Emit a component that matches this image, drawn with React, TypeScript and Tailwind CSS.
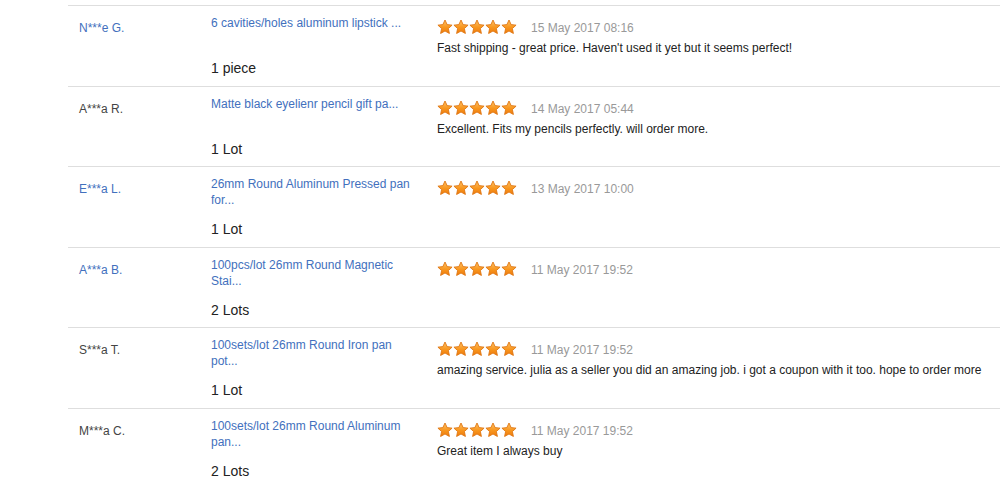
import React from 'react';

type Review = {
  name: string;
  nameBlue: boolean;
  title: string;
  qty: string;
  date: string;
  comment?: string;
  h: string;
};

const reviews: Review[] = [
  { name: 'N***e G.', nameBlue: true, title: '6 cavities/holes aluminum lipstick ...', qty: '1 piece', date: '15 May 2017 08:16', comment: "Fast shipping - great price. Haven't used it yet but it seems perfect!", h: 'h-[81px]' },
  { name: 'A***a R.', nameBlue: false, title: 'Matte black eyelienr pencil gift pa...', qty: '1 Lot', date: '14 May 2017 05:44', comment: 'Excellent. Fits my pencils perfectly. will order more.', h: 'h-[80px]' },
  { name: 'E***a L.', nameBlue: true, title: '26mm Round Aluminum Pressed pan for...', qty: '1 Lot', date: '13 May 2017 10:00', h: 'h-[81px]' },
  { name: 'A***a B.', nameBlue: true, title: '100pcs/lot 26mm Round Magnetic Stai...', qty: '2 Lots', date: '11 May 2017 19:52', h: 'h-[80px]' },
  { name: 'S***a T.', nameBlue: false, title: '100sets/lot 26mm Round Iron pan pot...', qty: '1 Lot', date: '11 May 2017 19:52', comment: 'amazing service. julia as a seller you did an amazing job. i got a coupon with it too. hope to order more', h: 'h-[81px]' },
  { name: 'M***a C.', nameBlue: false, title: '100sets/lot 26mm Round Aluminum pan...', qty: '2 Lots', date: '11 May 2017 19:52', comment: 'Great item I always buy', h: 'h-[80px]' },
];

function Star() {
  return (
    <svg width="16" height="16" viewBox="0 0 24 24" className="block">
      <defs>
        <linearGradient id="starFill" x1="0" y1="0" x2="0" y2="1">
          <stop offset="0%" stopColor="#ffc266" />
          <stop offset="55%" stopColor="#f8961e" />
          <stop offset="100%" stopColor="#ee7a0c" />
        </linearGradient>
      </defs>
      <path
        d="M12 1.5l3.2 6.9 7.4.8-5.5 5.1 1.5 7.4L12 18l-6.6 3.7 1.5-7.4L1.4 9.2l7.4-.8z"
        fill="url(#starFill)"
        stroke="#dd7410"
        strokeWidth="1.3"
        strokeLinejoin="round"
      />
    </svg>
  );
}

function Row({ r }: { r: Review }) {
  return (
    <div className={`flex border-t border-[#dedede] box-border ${r.h}`}>
      <div className={`w-[143px] pl-[11px] pt-[14px] text-[12px] leading-[16px] ${r.nameBlue ? 'text-[#4270bd]' : 'text-[#444]'}`}>
        {r.name}
      </div>
      <div className="w-[226px] pt-[9px]">
        <div className="w-[205px] h-[44px] text-[12px] leading-[16px] text-[#4270bd]">{r.title}</div>
        <div className="text-[14px] leading-[18px] text-[#222]">{r.qty}</div>
      </div>
      <div className="flex-1 pt-[12px]">
        <div className="flex items-center h-[17px]">
          <div className="flex">
            {[0, 1, 2, 3, 4].map(i => <Star key={i} />)}
          </div>
          <span className="ml-[14px] mt-[2px] text-[12px] text-[#999]">{r.date}</span>
        </div>
        {r.comment && (
          <div className="mt-[5px] text-[12px] leading-[16px] text-[#222]">{r.comment}</div>
        )}
      </div>
    </div>
  );
}

export default function App() {
  return (
    <div className="w-[1000px] h-[483px] overflow-hidden bg-white pt-[5px] pl-[68px]" style={{ fontFamily: '"Liberation Sans", Arial, sans-serif' }}>
      {reviews.map((r, i) => <Row key={i} r={r} />)}
    </div>
  );
}
